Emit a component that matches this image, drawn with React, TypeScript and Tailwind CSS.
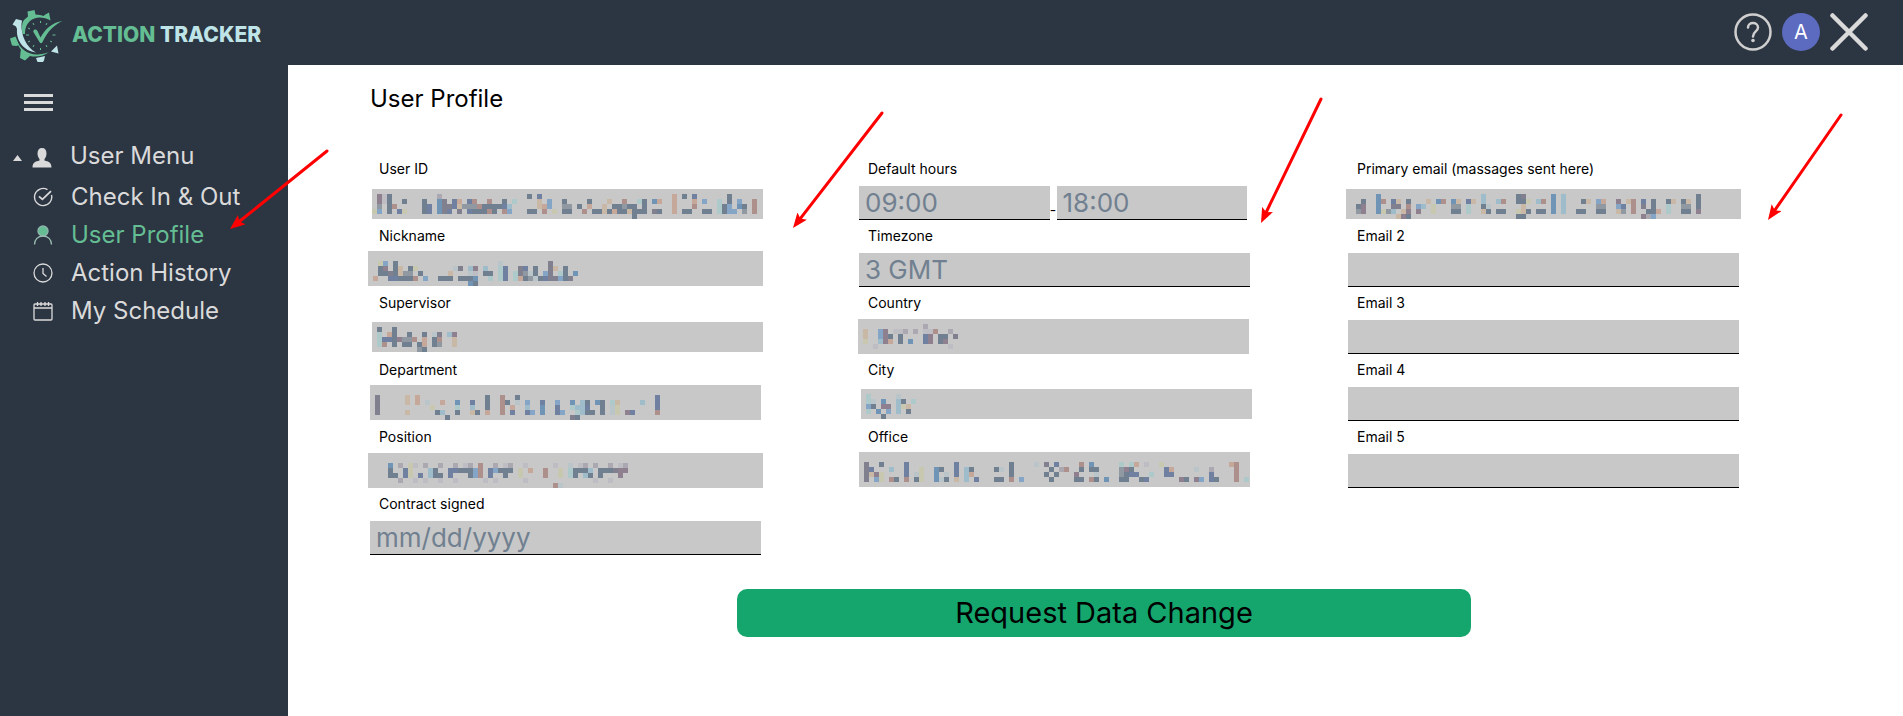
import { useId } from "react";
import type { ReactNode } from "react";

type Mosaic = { x: number; y: number; rows: string[] };

type Field = {
  label: string;
  value?: string;
  placeholder?: string;
  range?: [string, string];
  hidden?: Mosaic;
};

const CELL = 5;

const TONES: Record<string, string> = {
  s: "#708090",
  b: "#6f94b5",
  n: "#7080a0",
  u: "#84a5c5",
  c: "#9fbccb",
  t: "#adc9c9",
  l: "#bac5c9",
  y: "#c8c8b0",
  o: "#c8b8a5",
  p: "#c6a89a",
  r: "#ad908c",
  m: "#80808f",
  v: "#8f8090",
  g: "#9098a2",
  f: "#bdbdc3",
  a: "#aca8b2",
};

// Each row is a list of runs: start column followed by one tone letter per cell.
const PERSONAL: Field[] = [
  {
    label: "User ID",
    hidden: {
      x: 2,
      y: 3,
      rows: [
        "",
        "1vfs 13a 31s 33n 60p 62s 64n 71s",
        "1vfs 6s 10s 13b 14m 16n 17p 19n 20r 23r 26s 28t 33o 35u 38s 43s 47o 50r 53t 54s 56bp 60p 64p 66u 69t 71s 73u 76r",
        "1g 3sr 10sn 13bmmnoggg 21rsss 25sn 27c 33op 35u 38gg 41s 43p 46o 48ssgss 54s 60p 64r 69tsu 73bs 76r",
        "0yu 3s 5ny 10sn 13bm 15n 17m 19ns 21ssrs 26ru 31ss 34r 36y 38ss 42r 44ss 46osp 49ssosss 56ms 60p 62ss 66ss 69tsuu 74g 76r",
        "52s",
      ],
    },
  },
  {
    label: "Nickname",
    hidden: {
      x: -2,
      y: -2,
      rows: [
        "",
        "",
        "2yu 5s 26l 36m",
        "2sv 5so 8sy 17lm 20cv 23c 26tn 30m 31n 33s 36mo 39s",
        "2ssm 5so 7gg 10s 16o 20lf 23ss 26tn 29tm 31gl 33s 35um 38ts 41b",
        "1p 4nnss 8sr 11u 14sss 18ss 20sb 24t 26tn 29tpsgls 35nmm 38uss 40m",
        "20bs",
      ],
    },
  },
  {
    label: "Supervisor",
    hidden: {
      x: 2,
      y: 2,
      rows: [
        "",
        "1s 4s",
        "1t 3ps 7s 10s 12lm 15cv",
        "1tnns 5vggr 10p 12sr 16o",
        "1tr 4s 6ss 9sp 12sg 16o",
        "9gs",
      ],
    },
  },
  {
    label: "Department",
    hidden: {
      x: 0,
      y: -2,
      rows: [
        "",
        "",
        "1m 7o 9p 23s 26r 29s 57n",
        "1m 7o 9p 11l 14p 17b 20n 23s 26rs 29l 31u 34n 37u 40b 42cs 45bs 48to 54c 57n",
        "1m 12y 17t 20c 23s 26r 28p 31c 34b 37n 40tcc 43n 46s 48ly 57n",
        "1m 7o 13sc 17s 20os 23p 26r 28n 31nu 34b 37nu 41tc 43ss 46s 48ly 51vn 57r",
        "15s 40ms",
      ],
    },
  },
  {
    label: "Position",
    hidden: {
      x: -2,
      y: -1,
      rows: [
        "",
        "",
        "4b 6a 8yf 11a 14a 17a 19fa 22r 25a 27fa 31f 37f 40l 42fa 45a 48a 50fa",
        "4s 7ny 12cs 16nn 18sss 21ur 24nu 26sss 30y 32p 35r 38y 40ts 42ss 44c 46sss 48s 49mvv",
        "4ss 7ny 10n 12cs 14s 16n 20s 21ur 24n 27s 30y 35r 38y 40ts 43cs 46s 50v",
        "6a 9f 11f 14f 17f 23f 25f 31f 45f 48f",
        "37rl",
      ],
    },
  },
  { label: "Contract signed", placeholder: "mm/dd/yyyy" },
];

const WORK: Field[] = [
  { label: "Default hours", range: ["09:00", "18:00"] },
  { label: "Timezone", value: "3 GMT" },
  {
    label: "Country",
    hidden: {
      x: -1,
      y: -1,
      rows: [
        "",
        "13a",
        "1o 4uv 7ffa 11a 13ffr 18a",
        "1o 4uvs 8s 13nv 16ss 19m",
        "1y 4cvp 8s 10b 13nv 16sv",
        "3f 18f",
      ],
    },
  },
  {
    label: "City",
    hidden: {
      x: 2,
      y: 2,
      rows: ["", "1t 7l", "1tl 4b 7cs 10t", "1us 4vv 7cyo", "1t 3b 5u 7c 9s", "4s"],
    },
  },
  {
    label: "Office",
    hidden: {
      x: 0,
      y: -2,
      rows: [
        "",
        "",
        "1m 4s 9n 19n 30s 35l 37m 39n 44r 46b 52t 54tp 57f 60y 74pr",
        "1mn 6c 9n 12y 15bs 19n 21cs 27sl 30s 38s 40ar 44s 46ss 52gv 54s 61np 67l 70a 75r",
        "1mov 4y 9n 11ly 15b 17l 19n 21cp 30s 37s 39s 43v 47l 52gs 54nn 58t 61nn 70n 75r",
        "1m 3uy 6rs 9r 11sy 15bl 17s 19o 21c 23n 27ss 30r 32u 38s 43ss 46rs 49b 52ss 56sn 64vs 67vu 70ns 75r 77t",
      ],
    },
  },
];

const EMAILS: Field[] = [
  {
    label: "Primary email (massages sent here)",
    hidden: {
      x: -2,
      y: 3,
      rows: [
        "",
        "6b 27c 34sm 41b 43c 70s",
        "3s 6br 9no 12s 16o 18br 21bo 24no 27c 30cr 34ssy 38cr 41b 43c 47so 50up 54v 56or 59n 61s 64so 67so 70s",
        "2sv 6b 9mm 12r 14uc 17y 21gg 24t 27sl 35o 41b 43c 50gg 54un 57r 59m 61s 64t 67gg 70s",
        "2gv 6bygc 11ov 14v 17y 21ss 24t 27os 30ss 34yos 38ss 41b 43c 46ss 50ss 54og 57r 60sss 62p 64t 67ss 70v",
        "10ovs 34ss 59vau",
      ],
    },
  },
  { label: "Email 2", value: "" },
  { label: "Email 3", value: "" },
  { label: "Email 4", value: "" },
  { label: "Email 5", value: "" },
];

function MosaicPatch({ x, y, rows }: Mosaic) {
  return (
    <svg className="block w-full h-[34px] overflow-visible" aria-hidden="true" shapeRendering="crispEdges">
      <g transform={`translate(${x} ${y})`}>
        <rect width={x === -2 ? "101%" : "100%"} height={y < 0 ? 35 : 30} fill="#c8c8c8" />
        {rows.flatMap((row, r) =>
          row.split(" ").filter(Boolean).flatMap((run) => {
            const start = parseInt(run, 10);
            const tones = run.replace(/\d+/, "").split("");
            return tones.map((tone, i) => (
              <rect
                key={`${r}-${start}-${i}`}
                x={(start + i) * CELL}
                y={r * CELL}
                width={CELL}
                height={CELL}
                fill={TONES[tone]}
              />
            ));
          })
        )}
      </g>
    </svg>
  );
}

const inputClass =
  "block w-full min-w-0 h-[34px] px-[6px] bg-[#c8c8c8] border-b border-black text-[26px] text-[#708090] placeholder:text-[#708090] placeholder:opacity-100 outline-none";

function FieldRow({ field }: { field: Field }) {
  const id = useId();
  return (
    <div>
      <label htmlFor={id} className="block h-[33px] pl-[9px] text-sm leading-8 text-black">
        {field.label}
      </label>
      {field.hidden ? (
        <output id={id} className="block h-[34px]">
          <MosaicPatch {...field.hidden} />
        </output>
      ) : field.range ? (
        <div className="flex items-end pr-[3px]">
          <input id={id} className={inputClass} defaultValue={field.range[0]} readOnly />
          <span className="w-[7px] shrink-0 text-center text-sm">-</span>
          <input aria-label="Default hours end" className={inputClass} defaultValue={field.range[1]} readOnly />
        </div>
      ) : (
        <input
          id={id}
          className={inputClass}
          defaultValue={field.value}
          placeholder={field.placeholder}
          readOnly
        />
      )}
    </div>
  );
}

function Logo() {
  return (
    <svg width="54" height="55" viewBox="0 0 54 55" aria-hidden="true">
      <g fill="#64bd93">
        <path d="M18.5 4.5L25.500 3l1 4.500 4.500.5 4 1 .5-1L40 5.500l1.500 8C35 9.500 26 9 21 14c-4 4-5 8-5 13h-2.500C12.500 20 13 15 15 13l4-3.500z" />
        <path d="M1 31.500l5.500-2L8 33l2 5-2.500 1-4.500-.5z" />
        <path d="M8 34c3 7 10 14 21 13.500 5-.5 9-1.500 11-2.500-5 4-13 5.500-19 4l-5 4.500-5-2.500.5-6 .5-2-3-5z" />
        <path d="M25 23c1-1 3 0 3.500 1l3 6.500C36 22 44 15 53.500 14 45 18 39 24 34 34c-1 2.500-2.500 3-3.500 1L25 26c-1-1.500-1-2 0-3z" />
      </g>
      <g fill="#bfe4e8">
        <path d="M3.500 17.500L7 12l6 1.500-.5 3.500C12 28 17 40 27 45.500 15 44 7 34 8 22l-1-2.500z" />
        <path d="M27 51l9-2-1 4.500-1 1.500h-5.500zM42 44.500l6-6 1.500 8z" />
      </g>
      <path
        stroke="#64bd93"
        strokeWidth="1"
        d="M31.500 14v2M31.500 41v2M17 28h3M43.500 28h3M24 16l1 2M38 16l-1 2M19 21l2 1M19 35l2-1M24 40l1-2M38 40l-1-2M43 35l-2-1"
      />
    </svg>
  );
}

type MenuItem = { label: string; icon: ReactNode; active?: boolean };

const MENU: MenuItem[] = [
  {
    label: "Check In & Out",
    icon: (
      <svg width="20" height="20" viewBox="0 0 20 20" fill="none" stroke="currentColor" strokeWidth="1.4">
        <path d="M14.5 2.6A8.6 8.6 0 1 0 18.5 8" />
        <path d="M6 9.4l3.4 3L18 4.2" strokeWidth="1.8" />
      </svg>
    ),
  },
  {
    label: "User Profile",
    active: true,
    icon: (
      <svg width="20" height="20" viewBox="0 0 20 20" fill="none" stroke="currentColor" strokeWidth="1.4">
        <circle cx="10" cy="6" r="5" fill="currentColor" stroke="#8fb5ac" />
        <path d="M1.5 19.5c0-5 3.5-8.5 8.5-8.5s8.500 3.500 8.500 8.500" stroke="#9cbdb2" />
      </svg>
    ),
  },
  {
    label: "Action History",
    icon: (
      <svg width="20" height="20" viewBox="0 0 20 20" fill="none" stroke="currentColor" strokeWidth="1.3">
        <circle cx="10" cy="10" r="9" />
        <path d="M10 5v5.500l3.500 3" />
      </svg>
    ),
  },
  {
    label: "My Schedule",
    icon: (
      <svg width="20" height="20" viewBox="0 0 20 20" fill="none" stroke="currentColor" strokeWidth="1.3">
        <rect x="1" y="3" width="18" height="16" rx="1" />
        <path d="M1 7h18M4.500 1v4M8 1v4M12 1v4M15.500 1v4" />
      </svg>
    ),
  },
];

const ARROWS = [
  [327, 151, 230, 229],
  [882, 113, 793, 228],
  [1321, 99, 1261, 223],
  [1841, 115, 1768, 220],
];

function Arrows() {
  return (
    <svg className="absolute inset-0 h-full w-full pointer-events-none" aria-hidden="true">
      <defs>
        <marker id="tip" markerUnits="userSpaceOnUse" markerWidth="16" markerHeight="12" refX="15" refY="6" orient="auto">
          <path d="M0 0l15 6-15 6 3-6z" fill="#ff0000" />
        </marker>
      </defs>
      {ARROWS.map(([x1, y1, x2, y2]) => {
        const len = Math.hypot(x2 - x1, y2 - y1);
        const bx = x2 - ((x2 - x1) / len) * 10;
        const by = y2 - ((y2 - y1) / len) * 10;
        return (
          <g key={x1}>
            <line x1={x1} y1={y1} x2={bx} y2={by} stroke="#ff0000" strokeWidth="3" strokeLinecap="round" />
            <line x1={x1} y1={y1} x2={x2} y2={y2} markerEnd="url(#tip)" />
          </g>
        );
      })}
    </svg>
  );
}

export default function App() {
  return (
    <div className="relative flex flex-col min-h-screen bg-white font-['Inter',sans-serif] text-black">
      <header className="flex items-center h-[65px] pl-[9px] pr-[35px] bg-[#2c3542]">
        <a href="#" className="flex items-center gap-[9px] pt-1">
          <Logo />
          <span className="text-[21px] font-extrabold text-[#bfe4e8]">
            <span className="text-[#64bd93]">ACTION</span> TRACKER
          </span>
        </a>
        <div className="flex items-center gap-[10px] ml-auto pb-px text-[#dadada]">
          <button type="button" aria-label="Help">
            <svg width="38" height="38" viewBox="0 0 38 38" fill="none" stroke="#cfcfcf" strokeWidth="2.5">
              <circle cx="19" cy="19" r="17.500" />
              <path d="M14 14.500c0-6 10-6 10 0 0 4-5 4-5 9" strokeLinecap="round" />
              <circle cx="19" cy="27.500" r="1.800" fill="#cfcfcf" stroke="none" />
            </svg>
          </button>
          <button type="button" className="size-[38px] rounded-full bg-[#5c6bc0] text-xl text-white">
            A
          </button>
          <button type="button" aria-label="Close">
            <svg width="38" height="38" viewBox="0 0 38 38" stroke="currentColor" strokeWidth="4.500" strokeLinecap="round">
              <path d="M2.500 2.500l33 33M35.500 2.500l-33 33" />
            </svg>
          </button>
        </div>
      </header>

      <div className="flex grow">
        <aside className="w-72 shrink-0 bg-[#2c3542] text-[#dadada]">
          <button type="button" aria-label="Toggle menu" className="flex flex-col gap-1 mt-[29px] ml-6">
            <span className="w-[29px] h-[3px] bg-[#dadada]" />
            <span className="w-[29px] h-[3px] bg-[#dadada]" />
            <span className="w-[29px] h-[3px] bg-[#dadada]" />
          </button>
          <nav className="mt-6 text-2xl leading-[38px]">
            <button type="button" className="flex items-center w-full h-[41px] mb-[2px] pl-[13px] text-left">
              <svg className="mt-1" width="9" height="6" viewBox="0 0 9 6" fill="currentColor" aria-hidden="true">
                <path d="M4.500 0L9 6H0z" />
              </svg>
              <svg className="mt-1 ml-[10px]" width="20" height="20" viewBox="0 0 20 20" fill="currentColor" aria-hidden="true">
                <path d="M10 0c3 0 4.500 2 4.500 5.500 0 2.500-1 4.500-2 5.500v1.500c4 1 7 2 7 7H.5c0-5 3-6 7-7V11c-1-1-2-3-2-5.500C5.500 2 7 0 10 0z" />
              </svg>
              <span className="ml-[18px]">User Menu</span>
            </button>
            {MENU.map((item) => (
              <a
                key={item.label}
                href="#"
                className={`flex items-center gap-[18px] pl-[33px] ${item.active ? "text-[#64bd93]" : ""}`}
              >
                {item.icon}
                {item.label}
              </a>
            ))}
          </nav>
        </aside>

        <main className="grow min-w-0 pl-[82px] pr-[164px]">
          <h1 className="pt-4 text-2xl leading-9">User Profile</h1>
          <form className="mt-9">
            <div className="grid grid-cols-3 gap-x-[98px]">
              {[PERSONAL, WORK, EMAILS].map((fields) => (
                <div key={fields[0].label}>
                  {fields.map((field) => (
                    <FieldRow key={field.label} field={field} />
                  ))}
                </div>
              ))}
            </div>
            <button
              type="button"
              className="block w-[734px] h-12 mt-[34px] ml-auto mr-[268px] rounded-[10px] bg-[#15a66d] text-[29px] text-black"
            >
              Request Data Change
            </button>
          </form>
        </main>
      </div>

      <Arrows />
    </div>
  );
}
